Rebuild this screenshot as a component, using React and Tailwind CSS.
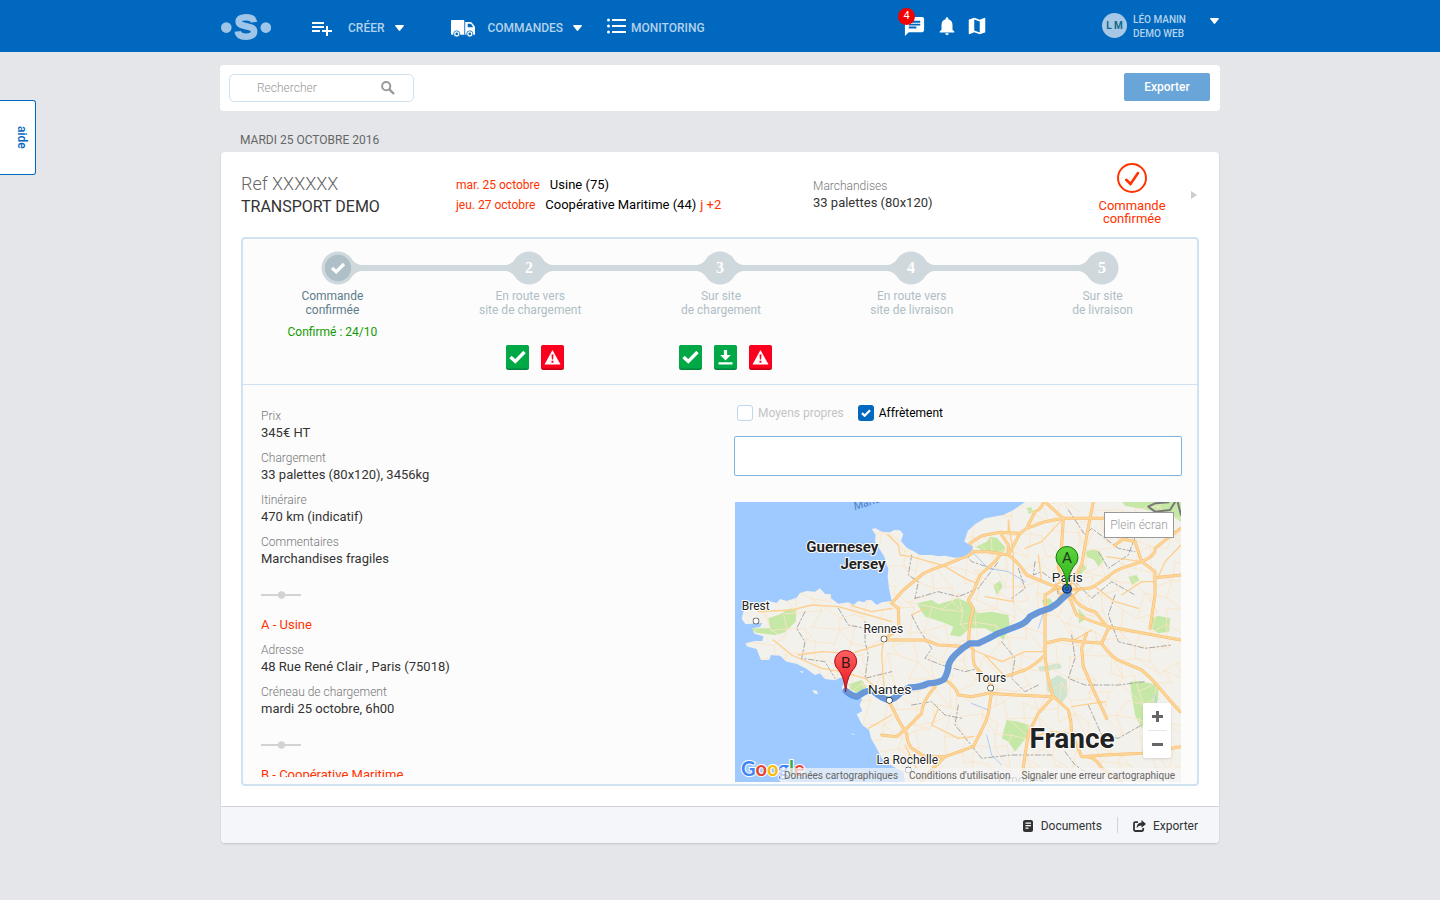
import React from "react";
import { MdChat, MdNotifications, MdMap } from "react-icons/md";

const Caret = () => (
  <svg viewBox="0 0 9 6" className="h-[6px] w-[9px]" fill="#fff" aria-hidden="true">
    <path d="M0 0.8Q0 0 1 0h7q1 0 1 .8L5.2 5.6q-.7.6-1.4 0z" />
  </svg>
);

const Logo = () => (
  <svg viewBox="0 0 50 28" className="h-7 w-[50px]" aria-hidden="true">
    <g fill="#9fc6e8">
      <circle cx="5.300" cy="15.600" r="5.300" />
      <circle cx="44.800" cy="15.600" r="5.300" />
    </g>
    <path
      d="M33 10.200C32.600 6.700 29.500 5.200 25 5.200c-4.600 0-7.300 1.700-7.300 4.400 0 6.500 15.400 2.700 15.400 9.900 0 3.600-3.500 5.200-8.100 5.200-4.800 0-7.900-1.700-8.300-5.400"
      fill="none"
      stroke="#9fc6e8"
      strokeWidth="6.600"
    />
  </svg>
);

const AddListIcon = () => (
  <svg viewBox="0 0 24 24" className="h-6 w-6" fill="#fff" aria-hidden="true">
    <path d="M14 10H2v2h12v-2zm0-4H2v2h12V6zm4 8v-4h-2v4h-4v2h4v4h2v-4h4v-2h-4zM2 16h8v-2H2v2z" />
  </svg>
);

const TruckIcon = () => (
  <svg viewBox="0 0 24 17" className="h-[17px] w-6" aria-hidden="true">
    <path fill="#fff" d="M0 1Q0 0 1 0h11.300q1 0 1 1v13.700H1q-1 0-1-1z" />
    <path fill="#fff" d="M14.200 2h5q1 0 1.700.8L23.500 6q.5.600.5 1.400v7.300h-9.800z" />
    <path fill="#0068be" d="M16.700 3.800h2.600q.5 0 .8.400l1.700 2.400q.4.700-.4.700h-4.700z" />
    <g fill="#fff" stroke="#0068be" strokeWidth="0.800">
      <circle cx="5.700" cy="13.900" r="3.100" />
      <circle cx="18.800" cy="13.900" r="3.100" />
    </g>
    <circle cx="5.700" cy="13.900" r="1.300" fill="#0068be" />
    <circle cx="18.800" cy="13.900" r="1.300" fill="#0068be" />
  </svg>
);

const ListIcon = () => (
  <svg viewBox="0 0 19 16" className="h-4 w-[19px]" fill="#fff" aria-hidden="true">
    <circle cx="1.500" cy="2" r="1.500" />
    <circle cx="1.500" cy="8" r="1.500" />
    <circle cx="1.500" cy="14" r="1.500" />
    <path d="M5 1h14v2H5zM5 7h14v2H5zM5 13h14v2H5z" />
  </svg>
);

const SearchIcon = () => (
  <svg viewBox="0 0 14 14" className="h-[14px] w-[14px]" fill="none" stroke="#999" aria-hidden="true">
    <circle cx="5.200" cy="5.200" r="4.100" strokeWidth="2" />
    <path d="M8.300 8.300 13 13" strokeWidth="2.400" />
  </svg>
);

const Check = ({ className, width = 3 }) => (
  <svg viewBox="0 0 16 12" className={className} fill="none" stroke="#fff" strokeWidth={width} aria-hidden="true">
    <path d="M1.500 6.200 5.800 10.300 14.500 1.600" />
  </svg>
);

function Header() {
  return (
    <header className="h-[52px] bg-[#0068be]">
      <div className="mx-auto flex h-full max-w-[1000px] items-center">
        <a href="#accueil" aria-label="Accueil" className="ml-px">
          <Logo />
        </a>
        <nav className="ml-[39px] flex items-center text-[12px] font-medium text-[#b3d2ec]">
          <button className="flex items-center pt-1">
            <AddListIcon />
            <span className="ml-[14px]">CRÉER</span>
            <span className="ml-[10px]">
              <Caret />
            </span>
          </button>
          <button className="ml-[47px] flex items-center pt-1">
            <TruckIcon />
            <span className="ml-[13px]">COMMANDES</span>
            <span className="ml-[10px]">
              <Caret />
            </span>
          </button>
          <a href="#monitoring" className="ml-[25px] flex items-center pt-1">
            <span className="mb-1">
              <ListIcon />
            </span>
            <span className="ml-[5px]">MONITORING</span>
          </a>
        </nav>
        <div className="ml-auto flex items-center gap-2 text-white">
          <button className="relative mr-[2px]" aria-label="Messages">
            <MdChat size={23} />
            <span className="absolute -left-[5px] -top-[7px] flex h-[17px] w-[17px] items-center justify-center rounded-full bg-[#f50000] text-[11px]">
              4
            </span>
          </button>
          <button aria-label="Notifications">
            <MdNotifications size={22} />
          </button>
          <button aria-label="Carte">
            <MdMap size={22} />
          </button>
        </div>
        <button className="ml-[114px] mr-[1px] flex items-center pb-[2px]">
          <span className="flex h-[25px] w-[25px] items-center justify-center rounded-full bg-[#a6c8e6] text-[10px] font-bold text-[#0f6b88]">
            L M
          </span>
          <span className="ml-[6px] w-[77px] pt-[4px] text-left text-[10px] font-medium leading-[14px] text-[#b3d2ec]">
            LÉO MANIN
            <br />
            DEMO WEB
          </span>
          <span className="-mt-2">
            <Caret />
          </span>
        </button>
      </div>
    </header>
  );
}

function Toolbar() {
  return (
    <div className="mt-[13px] flex h-[46px] items-center justify-between rounded-[4px] bg-white px-[9px]">
      <label className="flex h-7 w-[185px] items-center rounded-[5px] border border-[#cfe2f3] pl-[27px] pr-[18px]">
        <input
          type="search"
          aria-label="Rechercher"
          placeholder="Rechercher"
          className="min-w-0 flex-1 text-[12px] font-light outline-none placeholder:text-[#999]"
        />
        <SearchIcon />
      </label>
      <button className="mb-[2px] mr-px h-7 w-[86px] rounded-[2px] bg-[#69a5d8] text-[12px] font-medium text-white">Exporter</button>
    </div>
  );
}

function Summary() {
  return (
    <div className="flex h-[85px] px-5">
      <div className="w-[215px] pt-[20px]">
        <div className="text-[18px] font-light leading-[23px] text-[#666]">Ref XXXXXX</div>
        <div className="text-[16px] leading-[23px] text-[#333]">TRANSPORT DEMO</div>
      </div>
      <div className="w-[357px] pt-[23px] text-[12px] leading-5 text-[#ff3200]">
        <div className="flex gap-[10px]">
          mar. 25 octobre<span className="text-[13px] text-black">Usine (75)</span>
        </div>
        <div className="flex">
          jeu. 27 octobre<span className="ml-[10px] mr-1 text-[13px] text-black">Coopérative Maritime (44)</span>
          <span className="text-[13px]">j +2</span>
        </div>
      </div>
      <div className="pt-[25px] leading-[17px]">
        <div className="pt-px text-[12px] font-light leading-[16px] text-[#777]">Marchandises</div>
        <div className="text-[13px] text-[#333]">33 palettes (80x120)</div>
      </div>
      <div className="ml-auto flex w-[80px] flex-col items-center pt-[11px] text-center text-[13px] leading-[13px] text-[#ff3200]">
        <svg viewBox="0 0 30 30" className="mb-[6px] h-[30px] w-[30px] shrink-0" fill="none" stroke="#ff3200" aria-hidden="true">
          <circle cx="15" cy="15" r="14" strokeWidth="2" />
          <path d="M9.200 16.800 13.500 21 21 10" strokeWidth="2.600" strokeLinecap="round" />
        </svg>
        Commande
        <br />
        confirmée
      </div>
      <button className="ml-[19px] mr-[2px] self-center" aria-label="Réduire">
        <svg viewBox="0 0 6 8" className="h-2 w-[6px]" aria-hidden="true">
          <path d="M0 0 6 4 0 8z" fill="#ccc" />
        </svg>
      </button>
    </div>
  );
}

const Badge = ({ kind }) => (
  <svg viewBox="0 0 23 25" className="h-[25px] w-[23px]" role="img" aria-label={kind}>
    <rect width="23" height="25" rx="2.500" fill={kind === "alerte" ? "#c40014" : "#00833a"} />
    <rect width="23" height="23.600" rx="2.500" fill={kind === "alerte" ? "#fa001c" : "#00a846"} />
    {kind === "validé" && <path d="M4.500 12 9.300 16.400 18.500 7" fill="none" stroke="#fff" strokeWidth="3.400" />}
    {kind === "alerte" && (
      <g>
        <path d="M11.500 5 19.500 19.500h-16z" fill="#fff" />
        <path d="M10.500 9.500h2l-.4 5h-1.200zM10.500 15.700h2v2h-2z" fill="#fa001c" />
      </g>
    )}
    {kind === "chargé" && <path d="M9.900 5h3.200v5h3.700l-5.300 5.500L6.200 10h3.700zM4.500 17.200h14v2.200h-14z" fill="#fff" />}
  </svg>
);

const steps = [
  { title: ["Commande", "confirmée"], done: true, note: "Confirmé : 24/10", badges: [] },
  { title: ["En route vers", "site de chargement"], badges: ["validé", "alerte"] },
  { title: ["Sur site", "de chargement"], badges: ["validé", "chargé", "alerte"] },
  { title: ["En route vers", "site de livraison"], badges: [] },
  { title: ["Sur site", "de livraison"], badges: [] },
];

function StepNode({ index, done, first, last }) {
  return (
    <div className="flex w-full items-center">
      <span className={first ? "h-[6px] flex-1" : "h-[6px] flex-1 bg-[#cfd8dc]"} />
      <svg viewBox="0 0 50 34" className="h-[34px] w-[50px] shrink-0" aria-hidden="true">
        <circle cx="25" cy="17" r="16.500" fill="#cfd8dc" />
        {!first && <path d="M0 14C5 14 8 12 11.500 8L20 17 11.500 26C8 22 5 20 0 20z" fill="#cfd8dc" />}
        {!last && <path d="M50 14C45 14 42 12 38.500 8L30 17 38.500 26C42 22 45 20 50 20z" fill="#cfd8dc" />}
        {done ? (
          <g>
            <circle cx="25" cy="17" r="13.200" fill="#aebfc7" />
            <path d="M19 17 23.200 20.800 31 13" fill="none" stroke="#fff" strokeWidth="3.200" />
          </g>
        ) : (
          <text x="25" y="22" textAnchor="middle" fill="#fff" className="font-['Liberation_Serif',serif] text-[16px] font-bold">
            {index}
          </text>
        )}
      </svg>
      <span className={last ? "h-[6px] flex-1" : "h-[6px] flex-1 bg-[#cfd8dc]"} />
    </div>
  );
}

function Steps() {
  return (
    <ol className="grid h-[146px] grid-cols-5 border-b border-[#cfe2f3] pt-[12px] text-[12px] leading-[14px]">
      {steps.map((s, i) => (
        <li key={i} className="flex flex-col items-center text-center">
          <StepNode index={i + 1} done={s.done} first={i === 0} last={i === 4} />
          <div className={s.done ? "mt-1 pr-[12px] text-[#5d7d8c]" : "mt-1 pl-[2px] text-[#b0bec5]"}>
            {s.title[0]}
            <br />
            {s.title[1]}
          </div>
          {s.note && <div className="mt-2 pr-[12px] text-[#129a00]">{s.note}</div>}
          {s.badges.length > 0 && (
            <div className="mt-[28px] flex gap-3 pl-[12px]">
              {s.badges.map((b) => (
                <Badge key={b} kind={b} />
              ))}
            </div>
          )}
        </li>
      ))}
    </ol>
  );
}

const Field = ({ label, children }) => (
  <div className="mb-2 leading-[17px]">
    <dt className="pt-px text-[12px] font-light leading-[16px] text-[#777]">{label}</dt>
    <dd className="text-[13px] text-[#333]">{children}</dd>
  </div>
);

const Separator = () => (
  <svg viewBox="0 0 40 8" className="mb-[17px] mt-[24px] h-2 w-10" fill="#d3d3d3" aria-hidden="true">
    <path d="M0 3h40v2H0z" />
    <circle cx="20.500" cy="4" r="3.700" />
  </svg>
);

function Details() {
  return (
    <div className="mt-[22px] h-[370px] min-w-0 flex-1 overflow-hidden pl-[18px]">
      <dl>
        <Field label="Prix">345€ HT</Field>
        <Field label="Chargement">33 palettes (80x120), 3456kg</Field>
        <Field label="Itinéraire">470 km (indicatif)</Field>
        <Field label="Commentaires">Marchandises fragiles</Field>
      </dl>
      <Separator />
      <h2 className="mb-2 text-[13px] leading-[17px] text-[#ff3200]">A - Usine</h2>
      <dl>
        <Field label="Adresse">48 Rue René Clair , Paris (75018)</Field>
        <Field label="Créneau de chargement">mardi 25 octobre, 6h00</Field>
      </dl>
      <Separator />
      <h2 className="text-[13px] leading-[17px] text-[#ff3200]">B - Coopérative Maritime</h2>
    </div>
  );
}

const land =
  "M900 321 865 345 835 360 780 370 750 388 728 408 718 440 745 455 738 470 715 485 690 488 660 482 640 484 620 480 585 480 560 466 545 458 528 438 535 418 525 406 508 405 495 412 470 410 452 400 440 402 452 420 450 440 462 460 478 485 485 510 490 520 488 545 492 580 500 618 470 622 455 630 440 616 425 615 418 622 400 618 385 630 370 622 340 626 318 610 318 598 300 597 285 580 270 590 245 588 225 594 215 608 185 618 165 612 155 624 130 618 110 622 85 630 70 640 55 650 50 672 62 688 112 684 105 696 82 700 88 716 115 724 112 738 90 738 62 745 65 754 95 762 108 795 132 795 138 780 165 782 185 800 215 806 245 822 270 840 285 835 300 852 330 856 345 848 372 852 350 875 352 888 395 905 412 912 404 930 412 948 395 958 412 990 432 1005 438 1030 455 1060 470 1090 505 1115 535 1130 540 1161H1368V321z";

const parks = [
  "M752 455 785 440 795 425 815 428 840 455 838 470 800 472 770 465z",
  "M1192 321H1368V380L1345 365 1290 350 1240 340 1200 332z",
  "M1082 470 1108 462 1128 475 1138 495 1120 515 1108 495 1085 485z",
  "M1060 530 1070 500 1085 520 1065 540z",
  "M575 625 620 615 640 628 700 610 735 625 760 655 800 650 850 660 855 695 835 735 815 718 780 700 735 700 705 725 675 720 685 695 650 680 600 665z",
  "M130 670 165 658 195 640 215 645 212 680 180 712 150 720 85 712 80 700 135 700z",
  "M1280 670 1300 662 1335 670 1332 710 1300 715 1278 700z",
  "M1215 860 1240 858 1300 870 1300 915 1275 940 1250 1000 1230 960 1220 900z",
  "M845 975 880 980 912 990 910 1020 870 1070 850 1040 830 1030z",
  "M370 868 410 855 425 875 400 895 378 885z",
  "M805 570 825 558 833 575 815 600z",
  "M1210 545 1235 540 1243 555 1222 570z",
  "M905 340 918 335 925 352 912 358z",
  "M1060 640 1085 670 1062 685z",
  "M950 615 975 610 985 625 960 640z",
];

const forests = ["M965 860 1000 840 1025 855 1028 900 1010 925 985 905 965 885z", "M940 815 1005 805 1010 820 945 830z"];

const majorRoads =
  "M955 321Q948 345 930 350L905 400 885 415 825 412 770 422 735 445M960 321 1015 370 1010 450 1000 520 1025 580M905 400 960 380 1015 370H1140M1105 321 1095 370 1082 440 1070 510 1030 580M735 445 740 470 790 470 850 480Q880 500 905 540L990 575 1060 585M885 415 850 480M825 412 850 450V480M738 478 655 512Q600 530 590 540L535 585 500 625 520 640 522 700 475 735M1040 585 1100 578 1150 545Q1170 525 1205 515L1250 500Q1295 480 1290 460L1340 420 1368 400M1250 500 1230 440 1195 432 1170 450M1250 500 1290 530V600L1275 700M1290 548 1368 540M825 480 810 500 765 540 745 590 730 615 745 640 735 680 730 745 745 765Q740 810 760 825L800 870M475 735H600L640 750 730 755M660 855Q690 870 700 900L740 905 790 895 870 900 985 905M800 890 790 955Q785 980 770 1005L745 1055 660 1085 600 1145 590 1161M490 915 520 975 545 1015Q545 1040 560 1060L600 1085 660 1085M545 1000 590 955Q590 920 630 875M470 1020 515 1025 545 1000M960 640V760Q960 830 985 905L1030 945Q1040 980 1040 1015L1070 1085Q1110 1080 1130 1120L1190 1161M985 905 940 955 910 1015 895 1115 900 1161M960 745 1010 733 1070 740 1130 745Q1160 790 1190 800L1250 825Q1280 850 1300 875L1365 950M1030 600 1055 660Q1100 680 1150 695L1220 708 1368 735M1040 600Q1060 640 1110 650L1150 700 1130 745M1085 715 1070 760 1075 815 1110 895 1145 970M960 780Q930 810 900 825L840 845M1070 1085 1140 1080 1250 1075 1368 1055M1000 575 960 600 962 660";

const midRoads =
  "M488 418 520 450 525 480 560 485 655 512 720 550 755 565M100 650 200 645 260 630 340 635 430 660 500 680M145 735 200 780 290 820 350 830 420 850 490 910M475 745 380 775 290 770 220 780M475 735 470 780 478 890M500 640 440 650 380 632M850 375V412M850 375 865 480 865 620 780 605M940 480 950 560M1015 370 950 440 900 460M1145 485 1250 500M1110 575 1170 620 1240 640M1180 430 1150 372M1040 740 1100 705M1040 935 1140 920M780 780 840 845M640 940 620 990 700 1030 745 1025M560 660 600 640M430 1000 500 960M905 1030 980 1010 1040 1015M745 765 830 800 900 770 960 770M1368 450 1320 500 1300 545M575 1120 540 1050M1190 600 1250 560 1290 560";

const borders =
  "M560 480 550 540 580 560 570 610M570 610 640 590 700 605 760 580 820 500M1030 345 1080 420 1100 400 1140 430 1180 460 1230 470M930 500 925 540 950 530 990 560 1000 600M690 440 740 500 800 520M240 650 215 700 240 740 230 790 300 800 330 850M420 680V740L430 780 420 850 500 830M560 660 580 700 620 760 600 790 650 810 720 830 760 820M830 740 870 790 860 850 900 890 940 870M1170 600 1150 660 1180 740 1260 760 1340 750M1040 720 1050 790 1030 850 1080 870 1180 870 1260 860M700 930 690 990 730 1040 770 1090 860 1080 980 1080M560 930 620 920 660 960 710 970M1090 930 1130 1020 1180 1030 1250 990M1020 1070 1050 1110 1130 1161M340 640 370 690 420 700M1120 470 1150 520 1210 480 1240 400M880 520 900 580 860 610M1050 560 1100 610 1160 560 1230 600";

const meshPaths = (() => {
  const at = (r, c) => {
    const a = Math.abs(Math.sin(r * 127.1 + c * 311.7) * 43758.5) % 1;
    const b = Math.abs(Math.sin(r * 269.5 + c * 183.3) * 43758.5) % 1;
    return [Math.round(20 + c * 48 + a * 40), Math.round(310 + r * 46 + b * 40)];
  };
  let d = "";
  for (let r = 0; r < 19; r++) {
    for (let c = 0; c < 29; c++) {
      const p = at(r, c);
      const q = at(r, c + 1);
      const s = at(r + 1, c);
      const t = at(r + 1, c + 1);
      if ((r + c) % 3) d += `M${p}L${q}`;
      if ((r * 2 + c) % 3) d += `M${p}L${s}`;
      if ((r + c * 2) % 4 === 0) d += `M${p}L${t}`;
    }
  }
  return d;
})();

const route =
  "M362 887Q375 900 395 905L415 893Q430 885 445 889 470 910 490 915 510 912 525 895L555 877Q585 877 610 865 640 864 657 853 670 830 670 812 675 795 690 780 710 760 735 745H760Q790 732 820 715L885 690Q905 682 915 665L940 652 975 640Q1000 625 1010 612L1030 595 1026 581";

const cities = [
  { name: "Brest", x: 92, y: 645, cx: 93, cy: 678, size: "text-[36px]" },
  { name: "Rennes", x: 475, y: 713, cx: 477, cy: 732, size: "text-[36px]" },
  { name: "Tours", x: 798, y: 860, cx: 797, cy: 879, size: "text-[36px]" },
  { name: "La Rochelle", x: 547, y: 1106, cx: 550, cy: 1125, size: "text-[36px]" },
  { name: "Nantes", x: 494, y: 896, cx: 493, cy: 916, size: "text-[41px]" },
  { name: "Paris", x: 1027, y: 560, cx: 1026, cy: 581, size: "text-[41px]" },
];

const pinPath = "M0 0C-3-30-10-50-22-66A33 33 0 1 1 22-66C10-50 3-30 0 0z";

function RouteMap() {
  return (
    <div className="relative mx-px mt-[26px] h-[280px] overflow-hidden bg-[#9fcaff]">
      <svg viewBox="30 321 1338 840" preserveAspectRatio="xMidYMid slice" className="h-full w-full" role="img" aria-label="Itinéraire de Paris à Saint-Nazaire">
        <defs>
          <clipPath id="land">
            <path d={land} />
          </clipPath>
          <linearGradient id="pinA" x1="0" y1="0" x2="0" y2="1">
            <stop offset="0" stopColor="#5bd53e" />
            <stop offset="1" stopColor="#2cae17" />
          </linearGradient>
          <linearGradient id="pinB" x1="0" y1="0" x2="0" y2="1">
            <stop offset="0" stopColor="#ff6262" />
            <stop offset="1" stopColor="#e8121b" />
          </linearGradient>
        </defs>
        <path d={land} fill="#f3f1ec" />
        <path d="M262 885 275 887 280 898 268 895zM378 1015 390 1018 385 1020zM225 828 238 830 230 834z" fill="#f3f1ec" />
        <g clipPath="url(#land)" fill="none" strokeLinejoin="round" strokeLinecap="round">
          {parks.map((d) => (
            <path key={d} d={d} fill="#c5e8a6" />
          ))}
          {forests.map((d) => (
            <path key={d} d={d} fill="#cfe5cf" />
          ))}
          <path d={meshPaths} stroke="#fae5c6" strokeWidth="2.500" />
          <path d="M740 470 790 520 850 530 900 560M740 925 790 945M785 1020 800 1080 830 1110M960 640 940 700M1290 900 1300 960" stroke="#a9cdf7" strokeWidth="3" />
          <path d={borders} stroke="#a8a8a8" strokeWidth="3" strokeDasharray="16 7 5 7" />
          <path d={midRoads} stroke="#fdd08f" strokeWidth="4" />
          <path d={majorRoads} stroke="#f5bd70" strokeWidth="9" />
          <path d={majorRoads} stroke="#ffd595" strokeWidth="6" />
          <path d="M990 570 1010 560 1045 562 1062 585 1045 602 1008 600zM1000 550 1050 610M1050 550 1000 610M980 582H1075" stroke="#fcc77b" strokeWidth="5" />
          <path d="M1270 335 1290 325 1330 322M1270 335 1290 350 1335 345 1350 321M1358 321 1368 360" stroke="#777" strokeWidth="6" />
        </g>
        <path d={route} fill="none" stroke="#4f8fe6" strokeOpacity="0.9" strokeWidth="19" strokeLinejoin="round" strokeLinecap="round" />
        <path d={route} fill="none" stroke="#6f97cf" strokeWidth="10" strokeLinejoin="round" />
        <g textAnchor="middle" fill="#222" stroke="#fff" strokeWidth="6" className="[paint-order:stroke]">
          {cities.map((c) => (
            <g key={c.name}>
              <circle cx={c.cx} cy={c.cy} r="8" fill="#fff" stroke="#222" strokeWidth="3.500" />
              <text x={c.x} y={c.y} className={c.size}>
                {c.name}
              </text>
            </g>
          ))}
          <text x="352" y="471" className="text-[45px] font-bold">
            Guernesey
          </text>
          <text x="414" y="522" className="text-[45px] font-bold">
            Jersey
          </text>
          <text x="1041" y="1059" className="text-[84px] font-bold">
            France
          </text>
          <text x="888" y="1166" fill="#888" className="text-[36px]">
            Limoges
          </text>
        </g>
        <text x="390" y="346" transform="rotate(-18 390 346)" fill="#4c7fc9" className="text-[34px] italic">
          Manche
        </text>
        <g transform="translate(1026 581)">
          <circle r="13" fill="#2f6fd0" stroke="#10325f" strokeWidth="4" />
          <circle r="5" fill="none" stroke="#10325f" strokeWidth="3" />
          <path transform="translate(0 -3)" d={pinPath} fill="url(#pinA)" stroke="#1d7a10" strokeWidth="3" />
          <text y="-76" textAnchor="middle" fill="#1f3d17" className="text-[46px]">
            A
          </text>
        </g>
        <g transform="translate(362 890)">
          <path d={pinPath} fill="url(#pinB)" stroke="#a3121a" strokeWidth="3" />
          <text y="-70" textAnchor="middle" fill="#3d1515" className="text-[46px]">
            B
          </text>
        </g>
      </svg>
      <button className="absolute right-[7px] top-[10px] h-[26px] w-[70px] border border-[#999] bg-white text-[12px] font-light text-[#999]">
        Plein écran
      </button>
      <div className="absolute bottom-[24px] right-[10px] flex w-7 flex-col items-center rounded-[2px] bg-white shadow">
        <button className="flex h-[27px] w-full items-center justify-center" aria-label="Zoom avant">
          <svg viewBox="0 0 11 11" className="h-[11px] w-[11px]" fill="#666" aria-hidden="true">
            <path d="M4 0h3v4h4v3H7v4H4V7H0V4h4z" />
          </svg>
        </button>
        <span className="h-px w-[19px] bg-[#e6e6e6]" />
        <button className="flex h-[27px] w-full items-center justify-center" aria-label="Zoom arrière">
          <span className="h-[3px] w-[11px] bg-[#666]" />
        </button>
      </div>
      <div className="absolute bottom-[1px] left-[6px] font-['Lato',sans-serif] text-[20px] font-bold leading-[26px] [paint-order:stroke] [-webkit-text-stroke:2px_#fff]">
        <span className="text-[#4285f4]">G</span>
        <span className="text-[#ea4335]">o</span>
        <span className="text-[#fbbc05]">o</span>
        <span className="text-[#4285f4]">g</span>
        <span className="text-[#34a853]">l</span>
        <span className="text-[#ea4335]">e</span>
      </div>
      <div className="absolute bottom-0 right-0 flex h-[14px] items-center gap-[11px] bg-[#f5f5f5]/70 pl-1 pr-[6px] text-[10px] text-[#666]">
        <a href="#donnees">Données cartographiques</a>
        <a href="#conditions">Conditions d'utilisation</a>
        <a href="#signaler">Signaler une erreur cartographique</a>
      </div>
    </div>
  );
}

function Carrier() {
  return (
    <div className="w-[448px] pt-[18px]">
      <div className="ml-[3px] flex gap-[14px] text-[12px]">
        <label className="flex items-center gap-[5px] text-[#c4c4c4]">
          <input type="checkbox" className="h-4 w-4 appearance-none rounded-[3px] border border-[#bcd7ee] bg-white" />
          <span className="pt-px">Moyens propres</span>
        </label>
        <label className="flex items-center gap-[5px] text-black">
          <span className="relative h-4 w-4">
            <input type="checkbox" defaultChecked className="block h-4 w-4 appearance-none rounded-[3px] bg-[#0068be]" />
            <Check className="pointer-events-none absolute left-[3px] top-1 h-2 w-[10px]" width={3.6} />
          </span>
          <span className="pt-px">Affrètement</span>
        </label>
      </div>
      <input aria-label="Affréteur" className="mt-[14px] block h-10 w-full rounded-[2px] border border-[#7db3de] bg-white px-3 text-[13px]" />
      <RouteMap />
    </div>
  );
}

export default function App() {
  return (
    <div className="min-h-screen bg-[#e4e6ea] pb-[57px] font-['Roboto',sans-serif] text-[#333]">
      <Header />
      <button className="absolute left-0 top-[100px] flex h-[75px] w-9 items-center justify-end rounded-r-[3px] border border-l-0 border-[#0068be] bg-white pr-[5px] text-[12px] font-medium text-[#0068be]">
        <span className="leading-[16px] [writing-mode:vertical-rl]">aide</span>
      </button>
      <main className="mx-auto max-w-[1000px]">
        <Toolbar />
        <h1 className="ml-5 mt-[20px] text-[12px] leading-[18px] text-[#666]">MARDI 25 OCTOBRE 2016</h1>
        <section className="mx-px mt-[3px] overflow-hidden rounded-[4px] bg-white shadow-[0_1px_2px_rgba(0,0,0,0.15)]">
          <Summary />
          <div className="mx-5 mb-5 rounded-[4px] border-2 border-[#cfe3f3] bg-[#fcfcfc]">
            <Steps />
            <div className="flex pb-[2px] pr-[15px]">
              <Details />
              <Carrier />
            </div>
          </div>
          <footer className="flex h-[37px] items-center justify-end border-t border-[#d0d3d7] bg-[#f5f6fa] pr-[21px] pt-[2px] text-[12px] text-[#333]">
            <button className="flex items-center gap-2 pr-[15px]">
              <svg viewBox="0 0 10 12" className="h-3 w-[10px]" aria-hidden="true">
                <rect width="10" height="12" rx="2" fill="#333" />
                <path d="M2.500 2.500h5.500v1.200H2.500zM2.500 5h5.500v1.200H2.500zM2.500 7.500h3v1.200h-3z" fill="#fff" />
              </svg>
              Documents
            </button>
            <span className="mb-[2px] h-4 w-px bg-[#d0d3d7]" />
            <button className="flex items-center gap-[7px] pl-[15px]">
              <svg viewBox="0 0 13 12" className="h-3 w-[13px]" aria-hidden="true">
                <path d="M5 2.200H2.200Q1 2.200 1 3.400V9.800Q1 11 2.200 11H9Q10.200 11 10.200 9.800V8" fill="none" stroke="#333" strokeWidth="1.800" />
                <path d="M8.500 0 13 3.900 8.500 7.800V5.400Q5 5.200 3.600 8.200 3.600 2.700 8.500 2.400z" fill="#333" />
              </svg>
              Exporter
            </button>
          </footer>
        </section>
      </main>
    </div>
  );
}
